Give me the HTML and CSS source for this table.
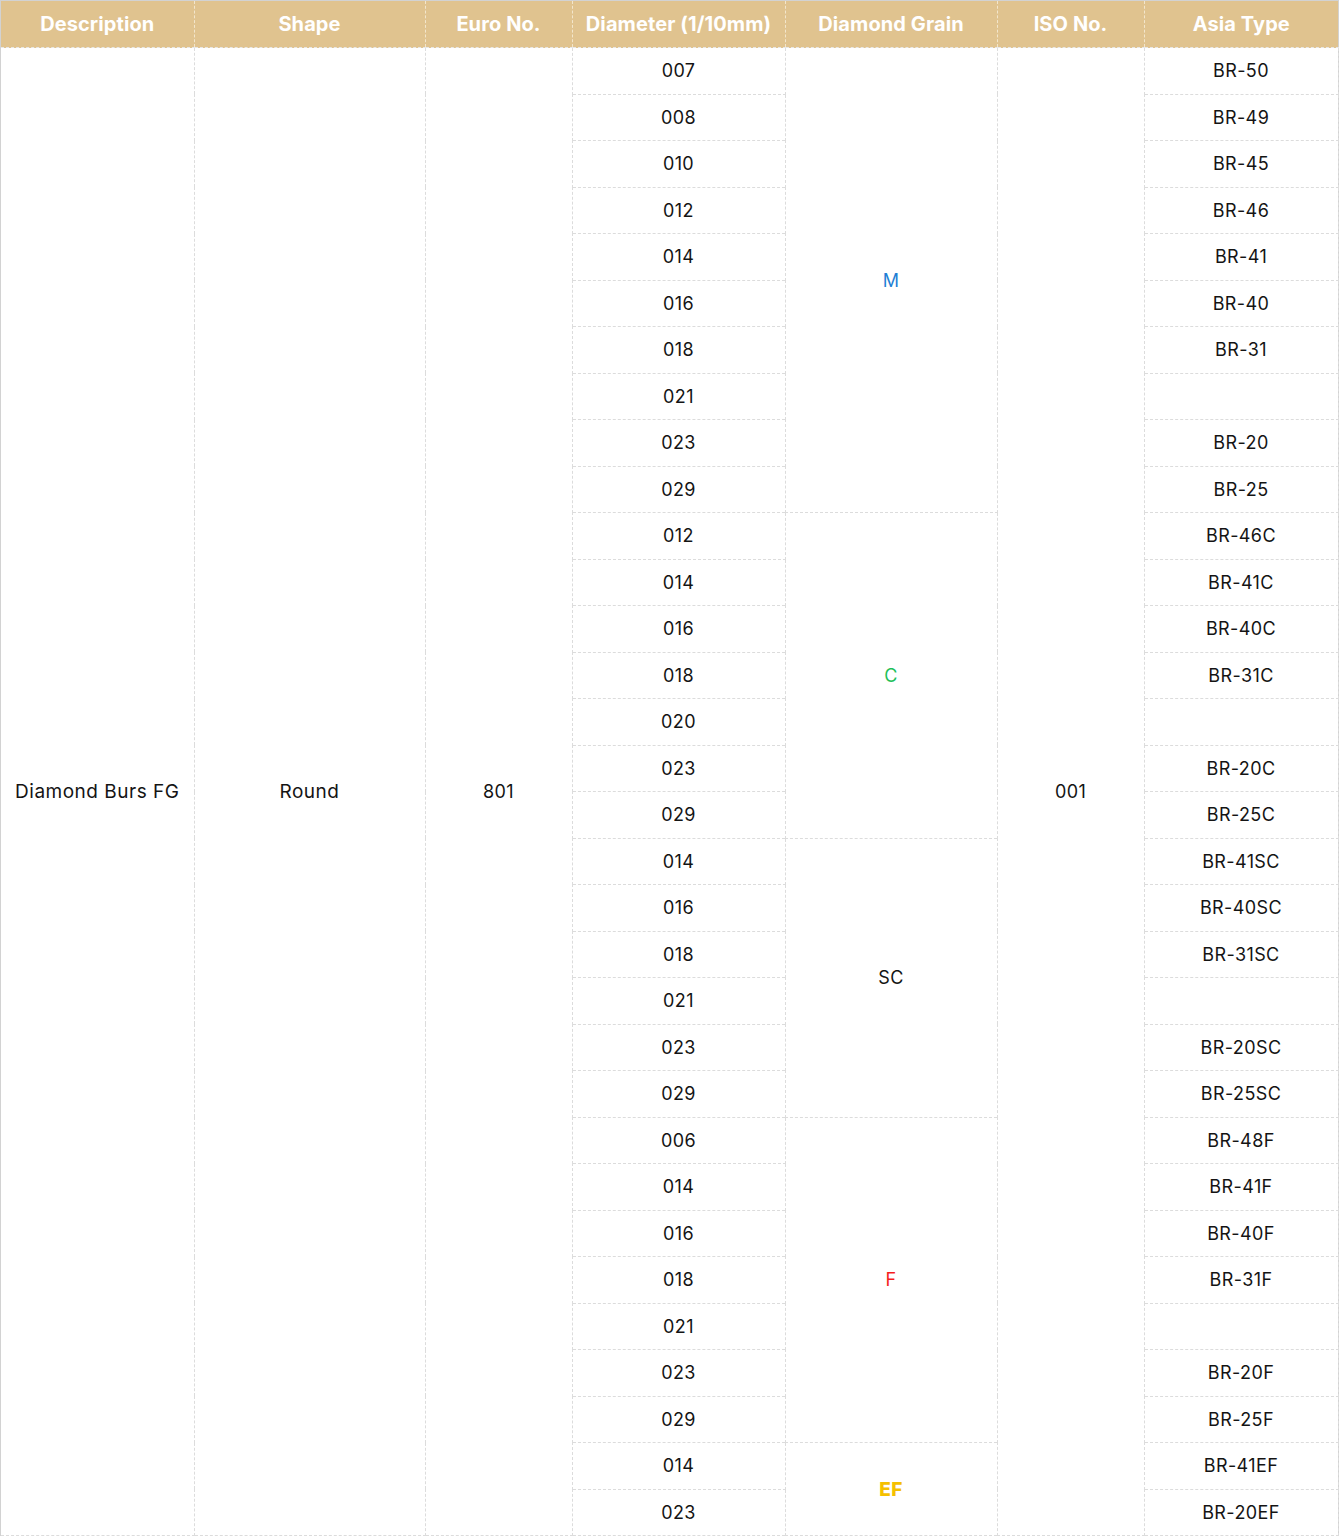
FILE: index.html
```html
<!DOCTYPE html>
<html lang="en">
<head>
<meta charset="utf-8">
<title>Diamond Burs FG</title>
<link rel="stylesheet" href="styles.css">
</head>
<body>
<div class="frame">
<table class="spec">
<colgroup>
<col class="c1"><col class="c2"><col class="c3"><col class="c4"><col class="c5"><col class="c6"><col class="c7">
</colgroup>
<thead>
<tr><th>Description</th><th>Shape</th><th>Euro No.</th><th>Diameter (1/10mm)</th><th>Diamond Grain</th><th>ISO No.</th><th>Asia Type</th></tr>
</thead>
<tbody>
<tr><td rowspan="32" class="word">Diamond Burs FG</td><td rowspan="32" class="word">Round</td><td rowspan="32">801</td><td>007</td><td rowspan="10" class="g-m">M</td><td rowspan="32">001</td><td>BR-50</td></tr>
<tr><td>008</td><td>BR-49</td></tr>
<tr><td>010</td><td>BR-45</td></tr>
<tr><td>012</td><td>BR-46</td></tr>
<tr><td>014</td><td>BR-41</td></tr>
<tr><td>016</td><td>BR-40</td></tr>
<tr><td>018</td><td>BR-31</td></tr>
<tr><td>021</td><td></td></tr>
<tr><td>023</td><td>BR-20</td></tr>
<tr><td>029</td><td>BR-25</td></tr>
<tr><td>012</td><td rowspan="7" class="g-c">C</td><td>BR-46C</td></tr>
<tr><td>014</td><td>BR-41C</td></tr>
<tr><td>016</td><td>BR-40C</td></tr>
<tr><td>018</td><td>BR-31C</td></tr>
<tr><td>020</td><td></td></tr>
<tr><td>023</td><td>BR-20C</td></tr>
<tr><td>029</td><td>BR-25C</td></tr>
<tr><td>014</td><td rowspan="6" class="g-sc">SC</td><td>BR-41SC</td></tr>
<tr><td>016</td><td>BR-40SC</td></tr>
<tr><td>018</td><td>BR-31SC</td></tr>
<tr><td>021</td><td></td></tr>
<tr><td>023</td><td>BR-20SC</td></tr>
<tr><td>029</td><td>BR-25SC</td></tr>
<tr><td>006</td><td rowspan="7" class="g-f">F</td><td>BR-48F</td></tr>
<tr><td>014</td><td>BR-41F</td></tr>
<tr><td>016</td><td>BR-40F</td></tr>
<tr><td>018</td><td>BR-31F</td></tr>
<tr><td>021</td><td></td></tr>
<tr><td>023</td><td>BR-20F</td></tr>
<tr><td>029</td><td>BR-25F</td></tr>
<tr><td>014</td><td rowspan="2" class="g-ef">EF</td><td>BR-41EF</td></tr>
<tr><td>023</td><td>BR-20EF</td></tr>
</tbody>
</table>
</div>
</body>
</html>
```

FILE: styles.css
```css
html, body {
  margin: 0;
  padding: 0;
  background: #ffffff;
}
.frame {
  width: 1339px;
  box-sizing: border-box;
  border-top: 1px solid #d2d2d2;
  border-left: 1px solid #d2d2d2;
  border-right: 1px solid #d2d2d2;
}
.spec {
  width: 100%;
  border-collapse: collapse;
  table-layout: fixed;
  font-family: Inter, "Liberation Sans", sans-serif;
  color: #141414;
}
.c1 { width: 193px; }
.c2 { width: 231px; }
.c3 { width: 147px; }
.c4 { width: 213px; }
.c5 { width: 212px; }
.c6 { width: 147px; }
.c7 { width: 194px; }
.spec th {
  height: 46px;
  padding: 0;
  background: #e0c38f;
  color: #ffffff;
  font-weight: 700;
  font-size: 20px;
  letter-spacing: 0.1px;
  text-align: center;
  vertical-align: middle;
  border-left: 1px dashed #f3e6cc;
  border-bottom: 1px dashed #e8e8e8;
}
.spec th:first-child { border-left: none; }
.spec td {
  height: 45.5px;
  padding: 0;
  font-size: 18px;
  font-weight: 400;
  letter-spacing: 0.4px;
  text-align: center;
  vertical-align: middle;
  border: 1px dashed #dcdcdc;
}
.spec td.word {
  font-size: 19px;
  letter-spacing: 0.5px;
}
.spec tr td:first-child { border-left: none; }
.g-m { color: #1f7fd4; }
.g-c { color: #1fbf5a; }
.g-sc { color: #141414; }
.g-f { color: #f51c1c; }
.spec td.g-ef { color: #f5c000; font-weight: 800; font-size: 19px; }
```
